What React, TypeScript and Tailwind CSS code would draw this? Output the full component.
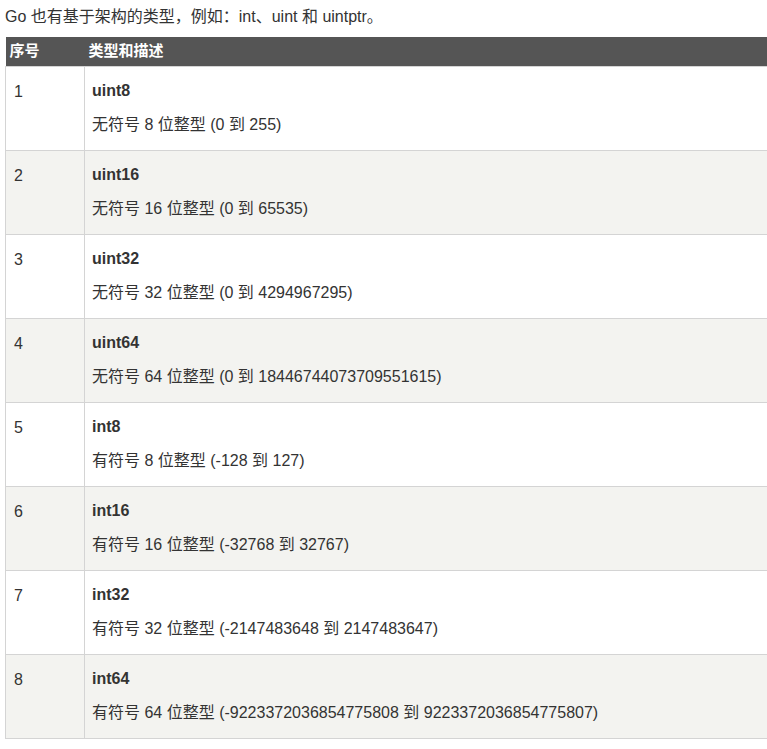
const rows = [
  { n: 1, name: "uint8", desc: "无符号 8 位整型 (0 到 255)" },
  { n: 2, name: "uint16", desc: "无符号 16 位整型 (0 到 65535)" },
  { n: 3, name: "uint32", desc: "无符号 32 位整型 (0 到 4294967295)" },
  { n: 4, name: "uint64", desc: "无符号 64 位整型 (0 到 18446744073709551615)" },
  { n: 5, name: "int8", desc: "有符号 8 位整型 (-128 到 127)" },
  { n: 6, name: "int16", desc: "有符号 16 位整型 (-32768 到 32767)" },
  { n: 7, name: "int32", desc: "有符号 32 位整型 (-2147483648 到 2147483647)" },
  { n: 8, name: "int64", desc: "有符号 64 位整型 (-9223372036854775808 到 9223372036854775807)" },
]

export default function App() {
  return (
    <div className="min-h-screen bg-white pl-[5px] pt-[7px] text-[#333] font-['Liberation_Sans','Noto_Sans_CJK_SC',sans-serif]">
      <p className="text-[16px] leading-[20px]">Go 也有基于架构的类型，例如：int、uint 和 uintptr。</p>

      <table className="mt-[10px] w-[762px] border-collapse text-[16px]">
        <thead>
          <tr className="bg-[#555] text-white">
            <th className="w-[79px] h-[29px] px-[4px] text-left font-bold text-[15px]">序号</th>
            <th className="h-[29px] px-[4px] text-left font-bold text-[15px]">类型和描述</th>
          </tr>
        </thead>
        <tbody>
          {rows.map((r) => (
            <tr key={r.n} className={r.n % 2 === 0 ? "bg-[#f3f3f0]" : "bg-white"}>
              <td className="border border-[#d4d4d4] align-top pl-[8px] pt-[15px] leading-[20px]">{r.n}</td>
              <td className="border border-[#d4d4d4] border-r-0 align-top pl-[7px] pt-[14px] pb-[15px]">
                <div className="font-bold leading-[20px]">{r.name}</div>
                <div className="mt-[14px] leading-[20px]">{r.desc}</div>
              </td>
            </tr>
          ))}
        </tbody>
      </table>
    </div>
  )
}
